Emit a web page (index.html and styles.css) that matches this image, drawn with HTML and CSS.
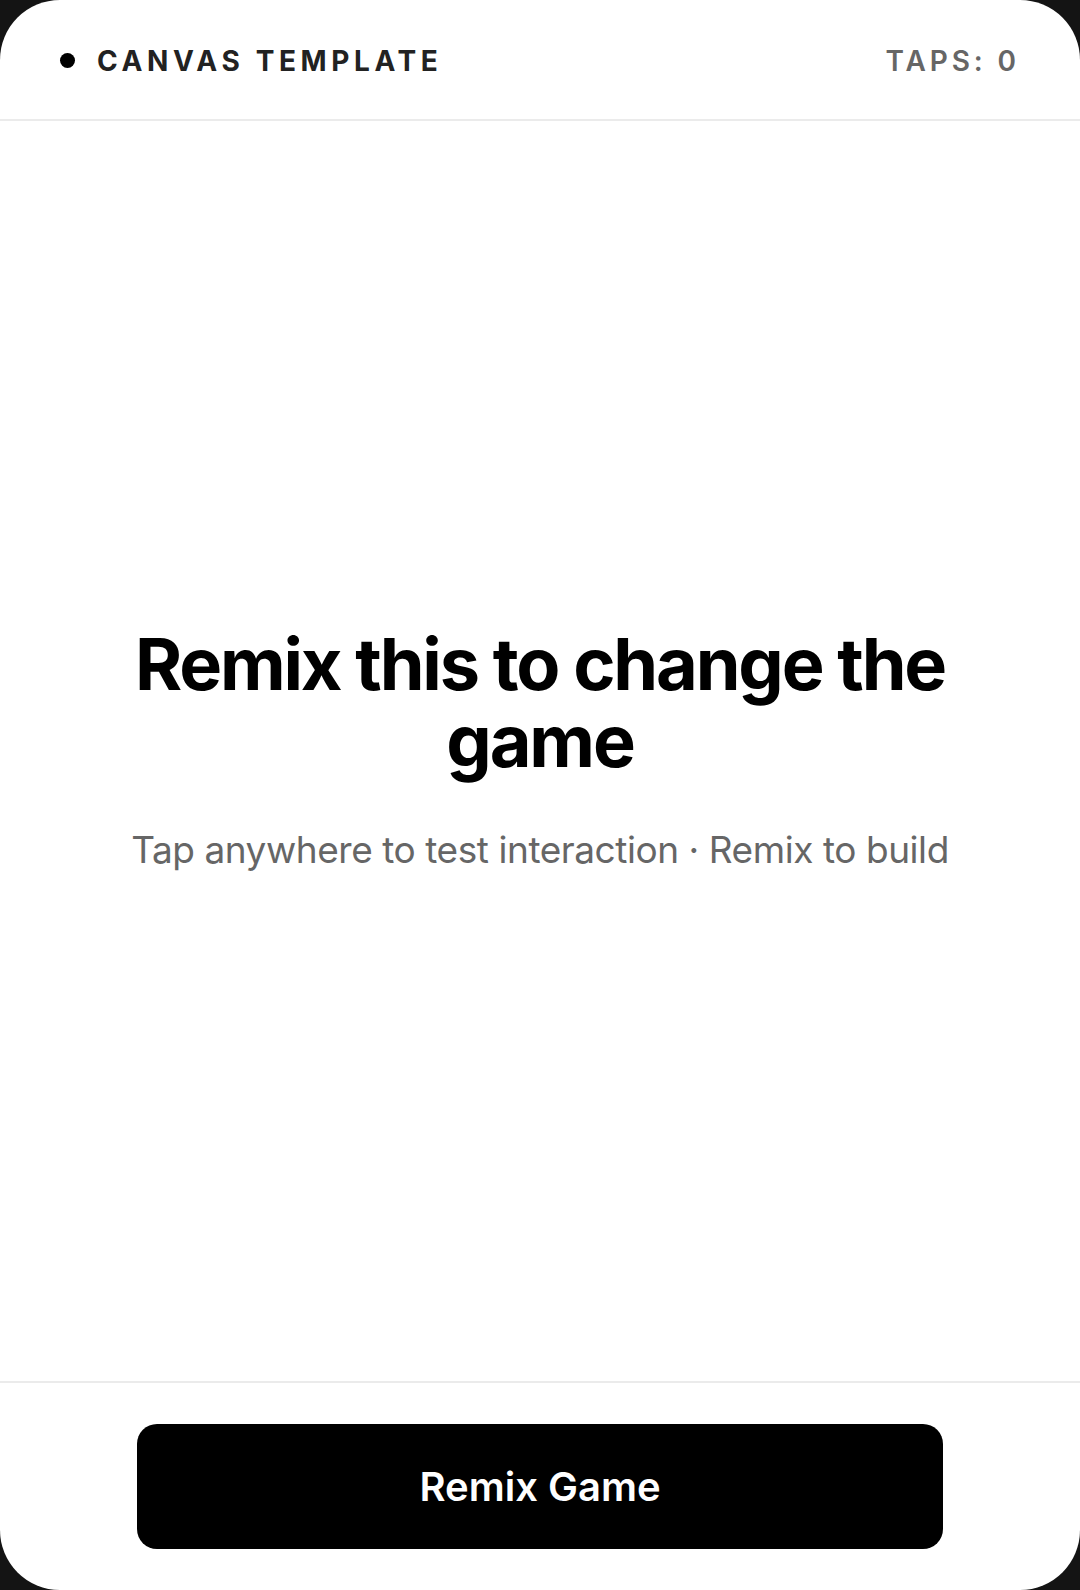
FILE: index.html
```html
<!DOCTYPE html>
<html lang="en">
<head>
<meta charset="utf-8">
<title>Canvas Template</title>
<link rel="stylesheet" href="styles.css">
</head>
<body>
<div class="card">
  <header class="topbar">
    <div class="brand"><span class="dot"></span><span class="brand-text">CANVAS TEMPLATE</span></div>
    <div class="taps">TAPS: 0</div>
  </header>
  <main class="stage">
    <h1 class="title">Remix this to change the game</h1>
    <p class="subtitle">Tap anywhere to test interaction · Remix to build</p>
  </main>
  <footer class="footer">
    <button class="remix-btn" type="button">Remix Game</button>
  </footer>
</div>
</body>
</html>
```
FILE: styles.css
```css
html, body {
  margin: 0;
  padding: 0;
  height: 100%;
}
body {
  background: #141414;
  font-family: Inter, "Noto Sans", "Liberation Sans", sans-serif;
}
.card {
  height: 1590px;
  background: #ffffff;
  border-radius: 60px;
  display: flex;
  flex-direction: column;
  overflow: hidden;
}
.topbar {
  border-bottom: 2px solid #ebebeb;
  display: flex;
  align-items: center;
  justify-content: space-between;
  padding: 2px 60px 0 60px;
  box-sizing: border-box;
  height: 121px;
}
.brand {
  display: flex;
  align-items: center;
  gap: 22px;
}
.dot {
  width: 15px;
  height: 15px;
  border-radius: 50%;
  background: #000;
}
.brand-text {
  font-size: 28px;
  font-weight: 700;
  letter-spacing: 0.165em;
  color: #222;
}
.taps {
  font-size: 28px;
  font-weight: 600;
  letter-spacing: 0.14em;
  color: #666;
}
.stage {
  flex: 1;
  display: flex;
  flex-direction: column;
  align-items: center;
  justify-content: center;
  padding: 0 60px 4px 60px;
  text-align: center;
}
.title {
  margin: 0;
  font-size: 72px;
  font-weight: 700;
  line-height: 1.06;
  letter-spacing: -0.03em;
  color: #000;
}
.subtitle {
  margin: 48px 0 0 0;
  font-size: 37px;
  font-weight: 400;
  color: #666;
  letter-spacing: -0.012em;
}
.footer {
  border-top: 2px solid #ebebeb;
  padding: 41px 0 41px 0;
  display: flex;
  justify-content: center;
}
.remix-btn {
  width: 806px;
  height: 125px;
  border: none;
  border-radius: 20px;
  background: #000;
  color: #fff;
  font-family: Inter, "Noto Sans", "Liberation Sans", sans-serif;
  font-size: 40px;
  font-weight: 600;
  letter-spacing: 0;
}
```
